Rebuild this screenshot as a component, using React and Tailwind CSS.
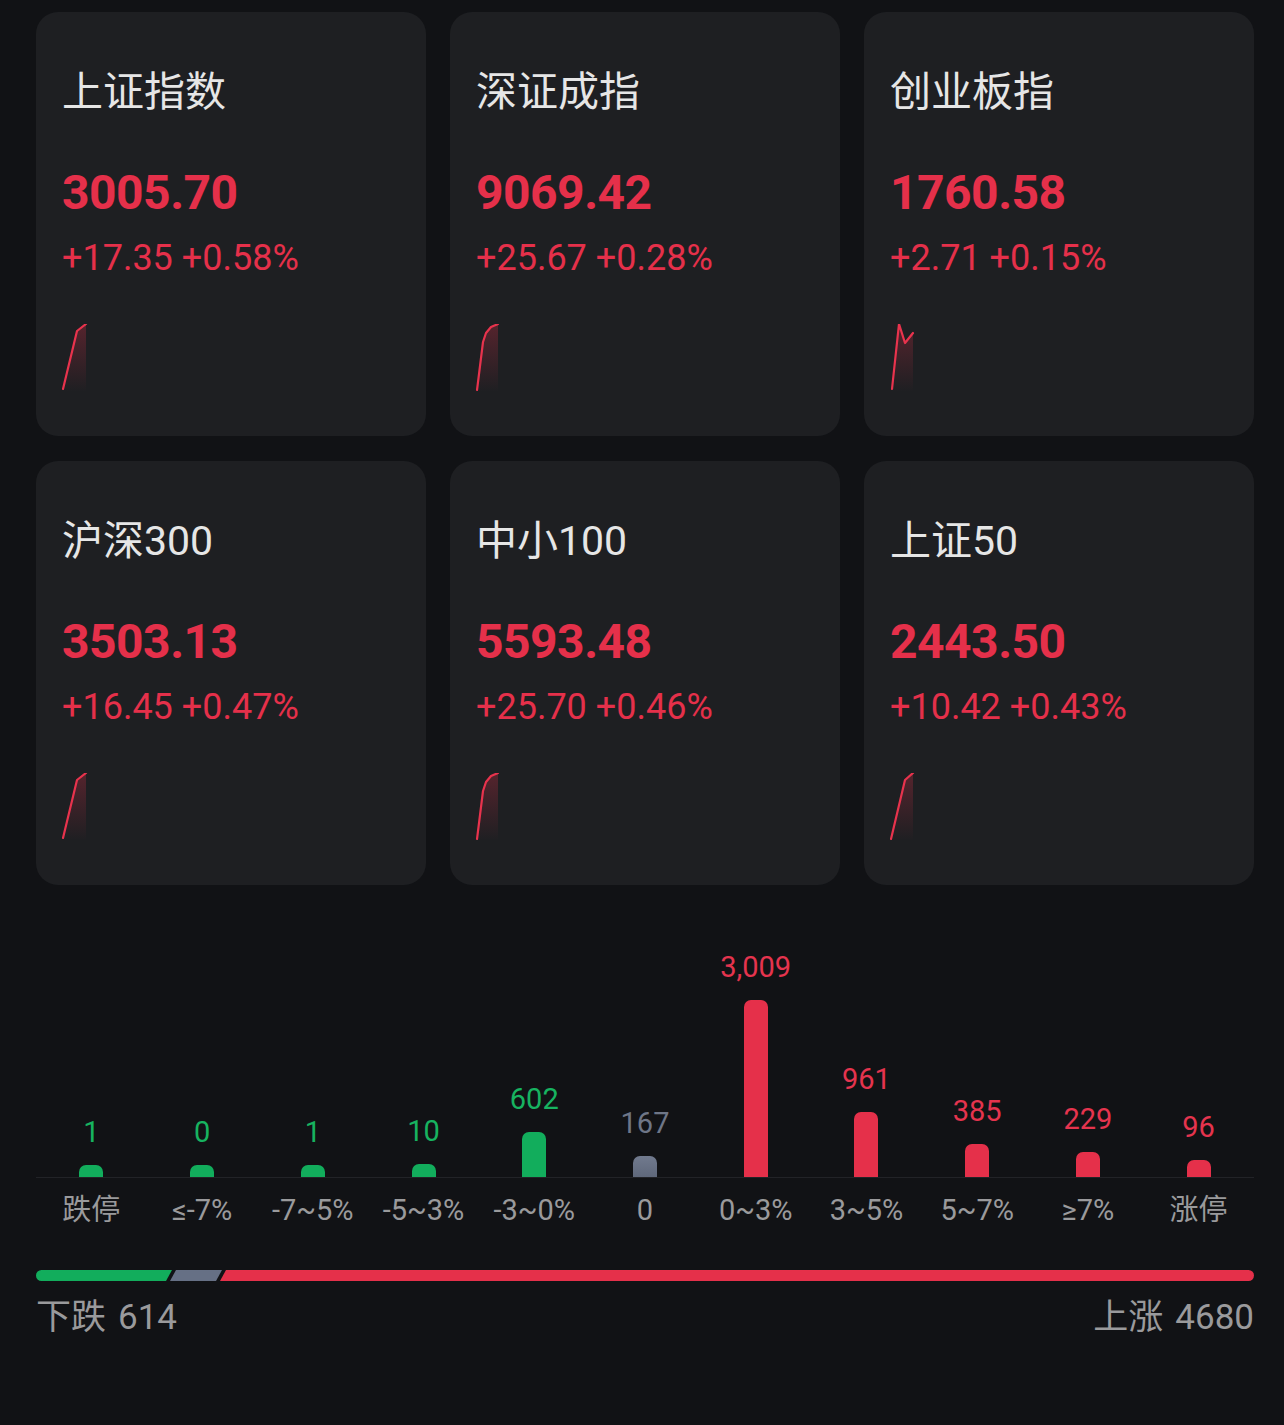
import React from 'react';

const indices = [
  { name: '上证指数', price: '3005.70', change: '+17.35 +0.58%', line: '1,65 15,7 24,0' },
  { name: '深证成指', price: '9069.42', change: '+25.67 +0.28%', line: '1,66 7,18 10,9 15,3 22,0' },
  { name: '创业板指', price: '1760.58', change: '+2.71 +0.15%', line: '2,65 9,0 15,19 23,9' },
  { name: '沪深300', price: '3503.13', change: '+16.45 +0.47%', line: '1,65 15,7 24,0' },
  { name: '中小100', price: '5593.48', change: '+25.70 +0.46%', line: '1,66 7,18 10,9 15,3 22,0' },
  { name: '上证50', price: '2443.50', change: '+10.42 +0.43%', line: '1,66 15,7 23,0' },
];

// distribution buckets
const buckets = [
  { label: '跌停', value: 1, tone: 'down' },
  { label: '≤-7%', value: 0, tone: 'down' },
  { label: '-7~5%', value: 1, tone: 'down' },
  { label: '-5~3%', value: 10, tone: 'down' },
  { label: '-3~0%', value: 602, tone: 'down' },
  { label: '0', value: 167, tone: 'flat' },
  { label: '0~3%', value: 3009, tone: 'up' },
  { label: '3~5%', value: 961, tone: 'up' },
  { label: '5~7%', value: 385, tone: 'up' },
  { label: '≥7%', value: 229, tone: 'up' },
  { label: '涨停', value: 96, tone: 'up' },
];

const maxValue = 3009;

function Sparkline({ points, id }) {
  const pts = points.split(' ');
  const last = pts[pts.length - 1].split(',')[0];
  const first = pts[0].split(',')[0];
  const area = `${points} ${last},68 ${first},68`;
  return (
    <svg width="120" height="70" viewBox="0 0 120 70" className="block">
      <defs>
        <linearGradient id={id} x1="0" y1="0" x2="0" y2="1">
          <stop offset="0%" stopColor="#e5304a" stopOpacity="0.28" />
          <stop offset="100%" stopColor="#e5304a" stopOpacity="0" />
        </linearGradient>
      </defs>
      <polygon points={area} fill={`url(#${id})`} />
      <polyline points={points} fill="none" stroke="#e8334d" strokeWidth="2.2" strokeLinejoin="round" strokeLinecap="round" />
    </svg>
  );
}

function IndexCard({ item, idx }) {
  return (
    <div className="h-[424px] rounded-[22px] bg-[#1e1f22] px-[26px] pt-[54px]">
      <div className="text-[41px] leading-[52px] text-[#e6e6e6]">{item.name}</div>
      <div className="mt-[47px] text-[48px] leading-[56px] font-bold text-[#e5304a] tracking-[-0.5px]">{item.price}</div>
      <div className="mt-[15px] text-[36px] leading-[44px] text-[#e5304a]">{item.change}</div>
      <div className="mt-[44px]">
        <Sparkline points={item.line} id={`spark-${idx}`} />
      </div>
    </div>
  );
}

function barColor(tone) {
  if (tone === 'down') return 'bg-[#12ad5c]';
  if (tone === 'flat') return 'bg-gradient-to-b from-[#717a8e] to-[#5f687b]';
  return 'bg-[#e5304a]';
}

function textColor(tone) {
  if (tone === 'down') return 'text-[#17b360]';
  if (tone === 'flat') return 'text-[#6e7687]';
  return 'text-[#e5344e]';
}

export default function App() {
  return (
    <div
      className="min-h-[1425px] w-full bg-[#111215] pl-[36px] pr-[30px] pt-[12px]"
      style={{ fontFamily: 'Roboto, "Noto Sans CJK SC", sans-serif' }}
    >
      {/* index cards */}
      <div className="grid grid-cols-3 gap-x-[24px] gap-y-[25px]">
        {indices.map((item, i) => (
          <IndexCard key={item.name} item={item} idx={i} />
        ))}
      </div>

      {/* distribution chart */}
      <div className="mt-[33px] grid h-[260px] grid-cols-11 border-b border-[#222327]">
        {buckets.map((b) => (
          <div key={b.label} className="flex flex-col items-center justify-end">
            <div className={`mb-[15px] text-[29px] leading-[36px] ${textColor(b.tone)}`}>
              {b.value.toLocaleString('en-US')}
            </div>
            <div
              className={`w-[24px] rounded-t-[7px] ${barColor(b.tone)}`}
              style={{ height: `${12 + (b.value / maxValue) * 165}px` }}
            />
          </div>
        ))}
      </div>
      <div className="mt-[15px] grid grid-cols-11">
        {buckets.map((b) => (
          <div key={b.label} className="text-center text-[29px] leading-[34px] text-[#9a9a9c]">
            {b.label}
          </div>
        ))}
      </div>

      {/* up / down ratio */}
      <div className="mt-[43px] flex h-[11px]">
        <div className="w-[136px] rounded-l-full bg-[#12ad5c] [clip-path:polygon(0_0,100%_0,calc(100%-6px)_100%,0_100%)]" />
        <div className="-ml-[2px] w-[52px] bg-[#667085] [clip-path:polygon(6px_0,100%_0,calc(100%-6px)_100%,0_100%)]" />
        <div className="-ml-[2px] flex-1 rounded-r-full bg-[#e5304a] [clip-path:polygon(6px_0,100%_0,100%_100%,0_100%)]" />
      </div>
      <div className="mt-[17px] flex justify-between text-[35px] leading-[40px] text-[#9a9a9c]">
        <span>下跌<span className="ml-[12px]">614</span></span>
        <span>上涨<span className="ml-[12px]">4680</span></span>
      </div>
    </div>
  );
}
